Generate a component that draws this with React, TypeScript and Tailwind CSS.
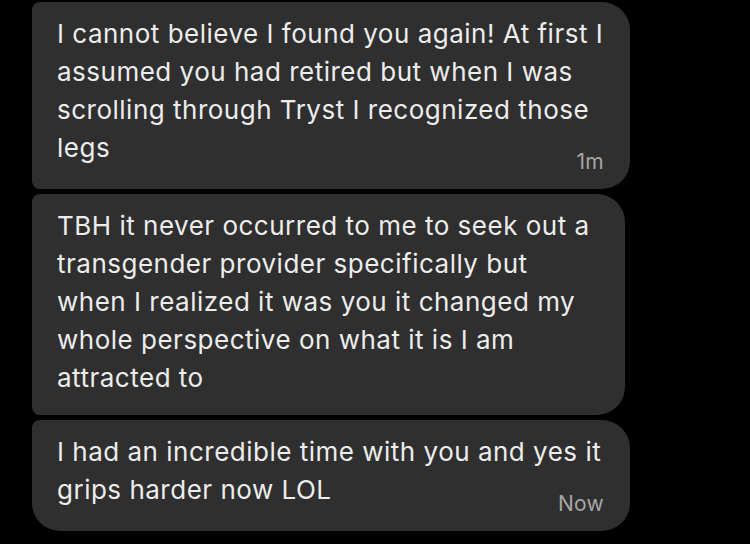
const font = { fontFamily: 'Inter, "Noto Sans", sans-serif' };

interface Message {
  lines: string[];
  time?: string;
  width: string;
  last?: boolean;
}

const messages: Message[] = [
  {
    lines: [
      'I cannot believe I found you again! At first I',
      'assumed you had retired but when I was',
      'scrolling through Tryst I recognized those',
      'legs',
    ],
    time: '1m',
    width: 'w-[598px]',
  },
  {
    lines: [
      'TBH it never occurred to me to seek out a',
      'transgender provider specifically but',
      'when I realized it was you it changed my',
      'whole perspective on what it is I am',
      'attracted to',
    ],
    width: 'w-[593px]',
  },
  {
    lines: [
      'I had an incredible time with you and yes it',
      'grips harder now LOL',
    ],
    time: 'Now',
    width: 'w-[598px]',
    last: true,
  },
];

function Bubble({ msg }: { msg: Message }) {
  return (
    <div
      className={`${msg.width} bg-[#2f2f2f] pl-[25px] pr-[26px] pt-[13px] ${
        msg.time ? 'pb-[15px]' : 'pb-[18px]'
      } rounded-tl-[8px] rounded-tr-[28px] rounded-br-[28px] ${
        msg.last ? 'rounded-bl-[28px]' : 'rounded-bl-[8px]'
      }`}
    >
      <div className="text-[26px] leading-[38px] tracking-[0.5px] text-[#ececec]">
        {msg.lines.map((line, i) => (
          <div key={i} className="whitespace-nowrap">
            {line}
          </div>
        ))}
      </div>
      {msg.time && (
        <div className="-mt-[17px] flex justify-end text-[21px] leading-[24px] tracking-[0.3px] text-[#a6a6a6]">
          {msg.time}
        </div>
      )}
    </div>
  );
}

export default function App() {
  return (
    <div
      className="flex h-[544px] w-[750px] flex-col gap-[5px] overflow-hidden bg-black pl-[32px] pt-[2px]"
      style={font}
    >
      {messages.map((m, i) => (
        <Bubble key={i} msg={m} />
      ))}
    </div>
  );
}
